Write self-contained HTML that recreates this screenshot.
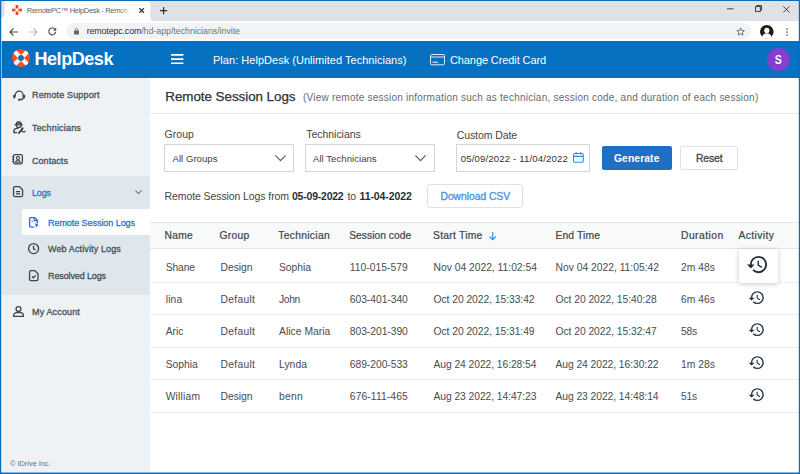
<!DOCTYPE html>
<html><head><meta charset="utf-8">
<style>
*{box-sizing:border-box;margin:0;padding:0}
html,body{width:800px;height:474px;overflow:hidden;background:#fff}
body{font-family:"Liberation Sans","DejaVu Sans",sans-serif;color:#333;position:relative}
.a,.t,svg{position:absolute}
.t{white-space:nowrap;line-height:1}
svg{overflow:visible}
#frame{left:0;top:0;width:800px;height:474px;border:solid #1473c6;border-width:1px 2px 2px 2px;z-index:50}
#tabbar{left:0;top:0;width:800px;height:21px;background:#dee1e6}
#tab{left:4.5px;top:1px;width:146.5px;height:20px;background:#fff;border-radius:5px 5px 0 0}
#toolbar{left:0;top:21px;width:800px;height:20px;background:#fff}
#url{left:66px;top:23px;width:685px;height:16px;border-radius:8px;background:#f1f3f4}
#hdr{left:0;top:41px;width:800px;height:37px;background:#0670c1}
#side{left:0;top:78px;width:150px;height:396px;background:#eef2f5}
#logs{left:0;top:176px;width:150px;height:119px;background:#dfe7ed}
#sel{left:22px;top:209px;width:128px;height:26px;background:#fff;border-radius:2px 0 0 2px}
#ttl{left:150px;top:113px;width:650px;height:1px;background:#e6e8ea}
.box{border:1px solid #d3d5d7;background:#fff}
#thead{left:150px;top:222px;width:650px;height:27px;background:#f8f9f9;border-top:1px solid #e4e6e8;border-bottom:1px solid #e4e6e8}
.rl{left:151px;width:649px;height:1px;background:#eceeef}
#hl{left:739px;top:249px;width:39px;height:34px;background:#fff;box-shadow:0 1px 5px rgba(0,0,0,.22)}
</style></head><body>
<div class="a" id="tabbar"></div>
<svg style="left:0;top:0" width="160" height="21" viewBox="0 0 160 21"><path d="M1.200 21V17.500q3.300 0 3.300-3.300V4.300q0-3.300 3.300-3.300H147q3.300 0 3.300 3.300v13.400q0 3.300 3.300 3.300H1.200z" fill="#fff"/></svg>
<div class="a" style="z-index:5;left:119px;top:3px;width:14px;height:14px;background:linear-gradient(90deg,rgba(255,255,255,0),#fff 85%)"></div>
<div class="a" id="toolbar"></div>
<div class="a" id="url"></div>
<div class="a" id="hdr"></div>
<div class="a" id="side"></div>
<div class="a" id="logs"></div>
<div class="a" id="sel"></div>
<div class="a" id="ttl"></div>
<div class="a" style="left:417px;top:46px;width:1px;height:26px;background:#2a62b5"></div>
<!-- filters -->
<div class="a box" style="left:164px;top:144px;width:130px;height:28px"></div>
<div class="a box" style="left:305px;top:144px;width:130px;height:28px"></div>
<div class="a box" style="left:456px;top:144px;width:134px;height:28px"></div>
<div class="a" style="left:602px;top:146px;width:70px;height:24px;background:#1f6fc4;border-radius:2px"></div>
<div class="a box" style="left:680px;top:146px;width:58px;height:24px;border-radius:2px;border-color:#dfe2e4"></div>
<div class="a box" style="left:427px;top:184px;width:96px;height:24px;border-radius:3px;border-color:#dfe2e4"></div>
<!-- table -->
<div class="a" id="thead"></div>
<div class="a rl" style="top:282px"></div>
<div class="a rl" style="top:314px"></div>
<div class="a rl" style="top:347px"></div>
<div class="a rl" style="top:379px"></div>
<div class="a rl" style="top:412px"></div>
<div class="a" id="hl"></div>
<!-- avatar -->
<div class="a" style="left:767px;top:47.700px;width:23px;height:23px;border-radius:50%;background:#8340cf"></div>
<!-- favicon -->
<svg style="left:11.900px;top:5.100px" width="10" height="10" viewBox="0 0 20 20"><defs><clipPath id="rg2"><path clip-rule="evenodd" d="M10 0a10 10 0 1 0 0 20a10 10 0 1 0 0-20zM10 6.400a3.600 3.600 0 1 1 0 7.200a3.600 3.600 0 1 1 0-7.200z"/></clipPath></defs><circle cx="10" cy="10" r="9.500" fill="#fff" stroke="#b9c6d0" stroke-width="1"/><g clip-path="url(#rg2)"><path d="M10 0V20M0 10H20" stroke="#f0401a" stroke-width="5.200"/></g></svg>
<!-- tab close, plus -->
<svg style="left:138.600px;top:8.100px" width="5.400" height="5" viewBox="0 0 5.400 5"><path d="M.4.300l4.600 4.400M5 .3L.4 4.700" stroke="#2f3337" stroke-width="1.250" fill="none"/></svg>
<svg style="left:160px;top:6.900px" width="7.200" height="7.200" viewBox="0 0 7.200 7.200"><path d="M3.600 0v7.200M0 3.600h7.200" stroke="#2f3337" stroke-width="1.250" fill="none"/></svg>
<!-- window controls -->
<svg style="left:726.5px;top:8px" width="7" height="2" viewBox="0 0 7 2"><path d="M0 .8h6.6" stroke="#333" stroke-width=".9"/></svg>
<svg style="left:754.5px;top:5px" width="7" height="7" viewBox="0 0 7 7"><rect x=".5" y="1.6" width="4.8" height="4.8" fill="none" stroke="#333" stroke-width=".9"/><path d="M1.8 1.6V.5h4.7v4.7H5.3" fill="none" stroke="#333" stroke-width=".9"/></svg>
<svg style="left:782.5px;top:5.5px" width="7" height="7" viewBox="0 0 7 7"><path d="M.3.3l6.2 6.2M6.5.3L.3 6.5" stroke="#333" stroke-width=".9" fill="none"/></svg>
<!-- nav arrows -->
<svg style="left:9px;top:27.5px" width="9" height="8" viewBox="0 0 9 8"><path d="M8.8 4H1M4.4.5L.9 4l3.5 3.5" stroke="#4a4d51" stroke-width="1.1" fill="none"/></svg>
<svg style="left:28.5px;top:27.5px" width="9" height="8" viewBox="0 0 9 8"><path d="M.2 4H8M4.6.5L8.1 4 4.6 7.5" stroke="#b9bcc0" stroke-width="1.1" fill="none"/></svg>
<svg style="left:48px;top:27.3px" width="9" height="9" viewBox="0 0 9 9"><path d="M7.6 4.9A3.4 3.4 0 1 1 6.6 2" stroke="#4a4d51" stroke-width="1.1" fill="none"/><path d="M8.2.6v3.2H5z" fill="#4a4d51"/></svg>
<!-- lock -->
<svg style="left:74.3px;top:28px" width="5" height="6.4" viewBox="0 0 10 13"><rect x="0" y="5" width="10" height="8" rx="1" fill="#5f6368"/><path d="M2.4 5.5V3.6a2.6 2.6 0 0 1 5.2 0V5.5" fill="none" stroke="#5f6368" stroke-width="1.5"/></svg>
<!-- star -->
<svg style="left:736.200px;top:27.200px" width="9.200" height="9.200" viewBox="0 0 24 24"><path d="M12 2.800l2.800 6.300 6.900.700-5.200 4.600 1.500 6.800L12 17.700 6 21.200l1.500-6.800L2.300 9.800l6.900-.700z" fill="none" stroke="#4a4d51" stroke-width="2" stroke-linejoin="round"/></svg>
<!-- profile -->
<svg style="left:760px;top:24.800px" width="13.600" height="13.600" viewBox="0 0 20 20"><circle cx="10" cy="10" r="10" fill="#1b1b1d"/><circle cx="10" cy="8" r="3.800" fill="#fff"/><path d="M3.200 17.300a7 7 0 0 1 13.600 0A9.500 9.500 0 0 1 10 20a9.500 9.500 0 0 1-6.800-2.700z" fill="#fff"/></svg>
<!-- menu dots -->
<svg style="left:786.2px;top:28px" width="2" height="8" viewBox="0 0 2 8"><circle cx="1" cy="1" r=".85" fill="#555"/><circle cx="1" cy="4" r=".85" fill="#555"/><circle cx="1" cy="7" r=".85" fill="#555"/></svg>
<!-- logo lifebuoy -->
<svg style="left:11.650px;top:49.350px" width="18" height="18" viewBox="0 0 20 20"><defs><clipPath id="rg"><path clip-rule="evenodd" d="M10 0a10 10 0 1 0 0 20a10 10 0 1 0 0-20zM10 6.700a3.300 3.300 0 1 1 0 6.600a3.300 3.300 0 1 1 0-6.600z"/></clipPath></defs><g clip-path="url(#rg)"><rect width="20" height="20" fill="#ea5326"/><path d="M0 0L20 20M20 0L0 20" stroke="#fff" stroke-width="4.600"/></g></svg>
<!-- hamburger -->
<svg style="left:170.800px;top:54px" width="12.400" height="10.400" viewBox="0 0 12.400 10.400"><path d="M0 .9h12.400M0 5.100h12.400M0 9.300h12.400" stroke="#fff" stroke-width="1.600"/></svg>
<!-- card -->
<svg style="left:430px;top:54px" width="15" height="11.500" viewBox="0 0 15 11.500"><rect x=".5" y=".5" width="14" height="10.300" rx="1.200" fill="none" stroke="#dfeaf6" stroke-width="1"/><path d="M.5 3h14" stroke="#dfeaf6" stroke-width="1"/><path d="M2.600 8.200h5.200" stroke="#dfeaf6" stroke-width="1.200"/></svg>
<!-- sidebar icons -->
<svg style="left:12.700px;top:89.800px" width="12.400" height="11.200" viewBox="0 0 12.400 11.200"><path d="M2.200 6.800V5.200a4 4 0 0 1 8 0v2.300a2 2 0 0 1-2 2H6.600" fill="none" stroke="#384651" stroke-width="1.300"/><rect x=".2" y="4.800" width="2.100" height="3.600" rx=".8" fill="#384651"/><rect x="10.100" y="4.800" width="2.100" height="3.600" rx=".8" fill="#384651"/><ellipse cx="6.200" cy="9.700" rx="1.300" ry="1.050" fill="#384651"/></svg>
<svg style="left:12.600px;top:120.600px" width="12.800" height="12.800" viewBox="0 0 12.800 12.800"><circle cx="5.700" cy="4.300" r="2.350" fill="none" stroke="#384651" stroke-width="1.300"/><path d="M3.100 3.700a2.650 2.900 0 0 1 5.300 0" fill="none" stroke="#384651" stroke-width="1.300"/><path d="M1.700 3.800h8" stroke="#384651" stroke-width="1.300"/><path d="M.900 11.700v-1.300a3 3 0 0 1 3-3h1.400" fill="none" stroke="#384651" stroke-width="1.400"/><path d="M.400 11.600h3.700" stroke="#384651" stroke-width="1.300"/><path d="M5.800 12.100l3.900-4.700" stroke="#384651" stroke-width="1.700" stroke-linecap="round"/><path d="M10.300 6.900a2 2 0 1 0 2 2.800" fill="none" stroke="#384651" stroke-width="1.300"/></svg>
<svg style="left:12.200px;top:154.300px" width="11" height="10.400" viewBox="0 0 11 10.400"><rect x="1.500" y=".55" width="8.900" height="9.300" rx="1.500" fill="none" stroke="#384651" stroke-width="1.300"/><path d="M0 2.800h1.500M0 5.200h1.500M0 7.600h1.500" stroke="#384651" stroke-width="1.050"/><circle cx="5.950" cy="4" r="1.500" fill="none" stroke="#384651" stroke-width="1.150"/><path d="M3.400 8.300a2.600 2.600 0 0 1 5.100 0z" fill="none" stroke="#384651" stroke-width="1.150"/></svg>
<svg style="left:12.800px;top:186px" width="10.200" height="11.200" viewBox="0 0 10.200 11.200"><path d="M2 .55h4.400l3.200 3.200v5.400a1.500 1.500 0 0 1-1.500 1.500H2A1.500 1.500 0 0 1 .55 9.150V2A1.500 1.500 0 0 1 2 .55z" fill="none" stroke="#384651" stroke-width="1.300"/><path d="M3 5.700h4.200M3 7.900h4.200" stroke="#384651" stroke-width="1.300"/></svg>
<svg style="left:135px;top:190px" width="7" height="4.500" viewBox="0 0 7 4.500"><path d="M.4.500l3.100 3.100L6.600.5" fill="none" stroke="#5d6973" stroke-width="1.050"/></svg>
<svg style="left:28.800px;top:217px" width="9.600" height="10.800" viewBox="0 0 9.600 10.800"><path d="M5.200 10.100H2A1.400 1.400 0 0 1 .6 8.700V2A1.400 1.400 0 0 1 2 .6h3.600l2.800 2.800v3" fill="none" stroke="#2a6fd0" stroke-width="1.400"/><path d="M5.200.8v2.800h3M2.500 4.300h1.600" stroke="#2a6fd0" stroke-width="1.150" fill="none"/><path d="M6.200 6.600l3.200 1.500-1.500.6-.5 1.600z" fill="#2a6fd0" stroke="#2a6fd0" stroke-width=".6" stroke-linejoin="round"/></svg>
<svg style="left:28.100px;top:242.600px" width="11.200" height="11.200" viewBox="0 0 11.200 11.200"><circle cx="5.600" cy="5.600" r="5" fill="none" stroke="#384651" stroke-width="1.300"/><path d="M5.500 2.700v3.100l2 1.100" fill="none" stroke="#384651" stroke-width="1.250"/></svg>
<svg style="left:28.900px;top:269.600px" width="9.600" height="11.200" viewBox="0 0 9.600 11.200"><path d="M1.900.55h3.900l3.200 3.200v5.500a1.400 1.400 0 0 1-1.400 1.400H1.900A1.400 1.400 0 0 1 .55 9.250V1.900A1.400 1.400 0 0 1 1.900.55z" fill="none" stroke="#384651" stroke-width="1.300"/><path d="M3 6.500l1.300 1.300 2.300-2.400" fill="none" stroke="#384651" stroke-width="1.300"/></svg>
<svg style="left:13px;top:306.200px" width="11" height="11" viewBox="0 0 11 11"><circle cx="5.500" cy="3" r="2.450" fill="none" stroke="#384651" stroke-width="1.300"/><path d="M.6 10.400V9.700a3 3 0 0 1 3-3h3.800a3 3 0 0 1 3 3v.7z" fill="none" stroke="#384651" stroke-width="1.300" stroke-linejoin="round"/></svg>
<!-- select chevrons -->
<svg style="left:275px;top:155px" width="11" height="6.500" viewBox="0 0 11 6.500"><path d="M.4.400l5.100 5.300L10.600.4" fill="none" stroke="#5a5f63" stroke-width="1.250"/></svg>
<svg style="left:415px;top:155px" width="11" height="6.500" viewBox="0 0 11 6.500"><path d="M.4.400l5.100 5.300L10.600.4" fill="none" stroke="#5a5f63" stroke-width="1.250"/></svg>
<!-- calendar -->
<svg style="left:573px;top:152.300px" width="10.800" height="10.800" viewBox="0 0 10.800 10.800"><rect x=".55" y="1.500" width="9.700" height="8.700" rx="1.300" fill="none" stroke="#2e8ce6" stroke-width="1.100"/><path d="M.6 4.400h9.600M3.100 0v2.400M7.700 0v2.400" stroke="#2e8ce6" stroke-width="1.100"/></svg>
<!-- sort arrow -->
<svg style="left:489px;top:232px" width="7.400" height="8.400" viewBox="0 0 7.400 8.400"><path d="M3.700 0v7.600M.5 4.500l3.200 3.200 3.200-3.200" fill="none" stroke="#2e8ce6" stroke-width="1.100"/></svg>
<!-- history icons -->
<svg style="left:746.100px;top:252.700px" width="23.040" height="23.040" viewBox="0 0 24 24"><path fill="#1f2f3d" d="M13 3a9 9 0 0 0-9 9H1l3.890 3.890.07.140L9 12H6c0-3.870 3.130-7 7-7s7 3.130 7 7-3.130 7-7 7c-1.930 0-3.680-.79-4.940-2.060l-1.420 1.420A8.954 8.954 0 0 0 13 21a9 9 0 0 0 0-18zm-1 5v5l4.280 2.540.72-1.210-3.500-2.080V8H12z"/></svg>
<svg style="left:748.200px;top:289px" width="17.280" height="17.280" viewBox="0 0 24 24"><path fill="#1f2f3d" d="M13 3a9 9 0 0 0-9 9H1l3.890 3.890.07.140L9 12H6c0-3.870 3.130-7 7-7s7 3.130 7 7-3.130 7-7 7c-1.930 0-3.680-.79-4.940-2.060l-1.420 1.420A8.954 8.954 0 0 0 13 21a9 9 0 0 0 0-18zm-1 5v5l4.280 2.540.72-1.210-3.500-2.080V8H12z"/></svg>
<svg style="left:748.200px;top:321.400px" width="17.280" height="17.280" viewBox="0 0 24 24"><path fill="#1f2f3d" d="M13 3a9 9 0 0 0-9 9H1l3.890 3.890.07.140L9 12H6c0-3.870 3.130-7 7-7s7 3.130 7 7-3.130 7-7 7c-1.930 0-3.680-.79-4.940-2.060l-1.420 1.420A8.954 8.954 0 0 0 13 21a9 9 0 0 0 0-18zm-1 5v5l4.280 2.540.72-1.210-3.500-2.080V8H12z"/></svg>
<svg style="left:748.200px;top:353.800px" width="17.280" height="17.280" viewBox="0 0 24 24"><path fill="#1f2f3d" d="M13 3a9 9 0 0 0-9 9H1l3.890 3.890.07.140L9 12H6c0-3.870 3.130-7 7-7s7 3.130 7 7-3.130 7-7 7c-1.930 0-3.680-.79-4.940-2.060l-1.420 1.420A8.954 8.954 0 0 0 13 21a9 9 0 0 0 0-18zm-1 5v5l4.280 2.540.72-1.210-3.500-2.080V8H12z"/></svg>
<svg style="left:748.200px;top:386.100px" width="17.280" height="17.280" viewBox="0 0 24 24"><path fill="#1f2f3d" d="M13 3a9 9 0 0 0-9 9H1l3.890 3.890.07.140L9 12H6c0-3.870 3.130-7 7-7s7 3.130 7 7-3.130 7-7 7c-1.930 0-3.680-.79-4.940-2.060l-1.420 1.420A8.954 8.954 0 0 0 13 21a9 9 0 0 0 0-18zm-1 5v5l4.280 2.540.72-1.210-3.500-2.080V8H12z"/></svg>

<span class="t" id="t0" style="left:26.8px;top:7.25px;font-size:7.5px;color:#5f6368;letter-spacing:-0.333px;">RemotePC&trade; HelpDesk - Remote</span>
<span class="t" id="t1" style="left:86.7px;top:26.97px;font-size:8.9px;color:#2a2d31;letter-spacing:-0.145px;">remotepc.com</span>
<span class="t" id="t2" style="left:141.2px;top:26.97px;font-size:8.9px;color:#70757a;letter-spacing:-0.052px;">/hd-app/technicians/invite</span>
<span class="t" id="t3" style="left:34.5px;top:49.76px;font-size:18px;font-weight:700;color:#fff;letter-spacing:-0.443px;">HelpDesk</span>
<span class="t" id="t4" style="left:213px;top:54.69px;font-size:11px;color:#fff;letter-spacing:0.029px;">Plan: HelpDesk (Unlimited Technicians)</span>
<span class="t" id="t5" style="left:450px;top:54.69px;font-size:11px;color:#fff;letter-spacing:-0.102px;">Change Credit Card</span>
<span class="t" id="t6" style="left:774.3px;top:53.93px;font-size:12.6px;font-weight:700;color:#fff;transform:scaleX(.84);transform-origin:50% 50%;">S</span>
<span class="t" id="t7" style="left:32px;top:91.38px;font-size:9px;color:#434e58;-webkit-text-stroke:0.28px;letter-spacing:0.147px;">Remote Support</span>
<span class="t" id="t8" style="left:32px;top:123.98px;font-size:9px;color:#434e58;-webkit-text-stroke:0.28px;letter-spacing:0.179px;">Technicians</span>
<span class="t" id="t9" style="left:32px;top:156.98px;font-size:9px;color:#434e58;-webkit-text-stroke:0.28px;letter-spacing:0.059px;">Contacts</span>
<span class="t" id="t10" style="left:32px;top:189.38px;font-size:9px;color:#2f74cf;-webkit-text-stroke:0.28px;letter-spacing:-0.133px;">Logs</span>
<span class="t" id="t11" style="left:48px;top:218.98px;font-size:9px;color:#2f74cf;-webkit-text-stroke:0.28px;letter-spacing:-0.056px;">Remote Session Logs</span>
<span class="t" id="t12" style="left:48px;top:244.78px;font-size:9px;color:#434e58;-webkit-text-stroke:0.28px;letter-spacing:0.125px;">Web Activity Logs</span>
<span class="t" id="t13" style="left:48px;top:272.38px;font-size:9px;color:#434e58;-webkit-text-stroke:0.28px;letter-spacing:-0.119px;">Resolved Logs</span>
<span class="t" id="t14" style="left:32px;top:307.78px;font-size:9px;color:#434e58;-webkit-text-stroke:0.28px;letter-spacing:0.147px;">My Account</span>
<span class="t" id="t15" style="left:9.9px;top:460.27px;font-size:7.6px;color:#6b747c;letter-spacing:-0.099px;">&copy; IDrive Inc.</span>
<span class="t" id="t16" style="left:165.3px;top:89.96px;font-size:13.4px;color:#2d3338;-webkit-text-stroke:0.25px;letter-spacing:-0.043px;">Remote Session Logs</span>
<span class="t" id="t17" style="left:303px;top:92.53px;font-size:10px;color:#666b70;letter-spacing:0.230px;">(View remote session information such as technician, session code, and duration of each session)</span>
<span class="t" id="t18" style="left:164.5px;top:128.71px;font-size:10.5px;color:#444;letter-spacing:0.062px;">Group</span>
<span class="t" id="t19" style="left:306.3px;top:128.71px;font-size:10.5px;color:#444;letter-spacing:-0.043px;">Technicians</span>
<span class="t" id="t20" style="left:456.7px;top:129.81px;font-size:10.5px;color:#444;letter-spacing:-0.089px;">Custom Date</span>
<span class="t" id="t21" style="left:172.5px;top:153.57px;font-size:9.6px;color:#444;letter-spacing:0.020px;">All Groups</span>
<span class="t" id="t22" style="left:313px;top:153.57px;font-size:9.6px;color:#444;letter-spacing:0.027px;">All Technicians</span>
<span class="t" id="t23" style="left:460.7px;top:153.57px;font-size:9.6px;color:#333;letter-spacing:0.150px;">05/09/2022 - 11/04/2022</span>
<span class="t" id="t24" style="left:614px;top:153.98px;font-size:10.3px;font-weight:700;color:#fff;letter-spacing:0.105px;">Generate</span>
<span class="t" id="t25" style="left:696px;top:153.98px;font-size:10.3px;color:#444;-webkit-text-stroke:0.3px;letter-spacing:-0.081px;">Reset</span>
<span class="t" id="t26" style="left:164.5px;top:190.61px;font-size:10.5px;color:#444;letter-spacing:-0.090px;">Remote Session Logs from</span>
<span class="t" id="t27" style="left:292px;top:190.61px;font-size:10.5px;font-weight:700;color:#2b2f33;letter-spacing:-0.222px;">05-09-2022</span>
<span class="t" id="t28" style="left:347.5px;top:190.61px;font-size:10.5px;color:#444;letter-spacing:-0.133px;">to</span>
<span class="t" id="t29" style="left:359.5px;top:190.61px;font-size:10.5px;font-weight:700;color:#2b2f33;letter-spacing:-0.094px;">11-04-2022</span>
<span class="t" id="t30" style="left:440.5px;top:191.78px;font-size:10.3px;color:#4a90e2;-webkit-text-stroke:0.3px;letter-spacing:-0.027px;">Download CSV</span>
<span class="t" id="t31" style="left:164.5px;top:230.58px;font-size:10.3px;color:#41474c;-webkit-text-stroke:0.22px;letter-spacing:0.258px;">Name</span>
<span class="t" id="t32" style="left:219.5px;top:230.58px;font-size:10.3px;color:#41474c;-webkit-text-stroke:0.22px;letter-spacing:0.275px;">Group</span>
<span class="t" id="t33" style="left:278.2px;top:230.58px;font-size:10.3px;color:#41474c;-webkit-text-stroke:0.22px;letter-spacing:0.314px;">Technician</span>
<span class="t" id="t34" style="left:349.2px;top:230.58px;font-size:10.3px;color:#41474c;-webkit-text-stroke:0.22px;letter-spacing:0.014px;">Session code</span>
<span class="t" id="t35" style="left:433px;top:230.58px;font-size:10.3px;color:#41474c;-webkit-text-stroke:0.22px;letter-spacing:0.258px;">Start Time</span>
<span class="t" id="t36" style="left:555.5px;top:230.58px;font-size:10.3px;color:#41474c;-webkit-text-stroke:0.22px;letter-spacing:0.125px;">End Time</span>
<span class="t" id="t37" style="left:681px;top:230.58px;font-size:10.3px;color:#41474c;-webkit-text-stroke:0.22px;letter-spacing:0.460px;">Duration</span>
<span class="t" id="t38" style="left:738.4px;top:230.58px;font-size:10.3px;color:#41474c;-webkit-text-stroke:0.22px;letter-spacing:0.422px;">Activity</span>
<span class="t" id="t39" style="left:165.7px;top:262.98px;font-size:10.3px;color:#474c51;letter-spacing:-0.096px;">Shane</span>
<span class="t" id="t40" style="left:220.6px;top:262.98px;font-size:10.3px;color:#474c51;letter-spacing:-0.027px;">Design</span>
<span class="t" id="t41" style="left:279px;top:262.98px;font-size:10.3px;color:#474c51;letter-spacing:-0.010px;">Sophia</span>
<span class="t" id="t42" style="left:349.8px;top:262.98px;font-size:10.3px;color:#474c51;letter-spacing:0.033px;">110-015-579</span>
<span class="t" id="t43" style="left:433.5px;top:262.98px;font-size:10.3px;color:#474c51;letter-spacing:-0.002px;">Nov 04 2022, 11:02:54</span>
<span class="t" id="t44" style="left:555.5px;top:262.98px;font-size:10.3px;color:#474c51;letter-spacing:0.003px;">Nov 04 2022, 11:05:42</span>
<span class="t" id="t45" style="left:681px;top:262.98px;font-size:10.3px;color:#474c51;letter-spacing:0.003px;">2m 48s</span>
<span class="t" id="t46" style="left:165.7px;top:295.28px;font-size:10.3px;color:#474c51;letter-spacing:0.167px;">lina</span>
<span class="t" id="t47" style="left:220.6px;top:295.28px;font-size:10.3px;color:#474c51;letter-spacing:0.266px;">Default</span>
<span class="t" id="t48" style="left:279px;top:295.28px;font-size:10.3px;color:#474c51;letter-spacing:-0.336px;">John</span>
<span class="t" id="t49" style="left:349.8px;top:295.28px;font-size:10.3px;color:#474c51;letter-spacing:-0.037px;">603-401-340</span>
<span class="t" id="t50" style="left:433.5px;top:295.28px;font-size:10.3px;color:#474c51;letter-spacing:-0.043px;">Oct 20 2022, 15:33:42</span>
<span class="t" id="t51" style="left:555.5px;top:295.28px;font-size:10.3px;color:#474c51;letter-spacing:-0.038px;">Oct 20 2022, 15:40:28</span>
<span class="t" id="t52" style="left:681px;top:295.28px;font-size:10.3px;color:#474c51;letter-spacing:0.003px;">6m 46s</span>
<span class="t" id="t53" style="left:165.7px;top:327.48px;font-size:10.3px;color:#474c51;letter-spacing:-0.034px;">Aric</span>
<span class="t" id="t54" style="left:220.6px;top:327.48px;font-size:10.3px;color:#474c51;letter-spacing:0.266px;">Default</span>
<span class="t" id="t55" style="left:279px;top:327.48px;font-size:10.3px;color:#474c51;letter-spacing:0.033px;">Alice Maria</span>
<span class="t" id="t56" style="left:349.8px;top:327.48px;font-size:10.3px;color:#474c51;letter-spacing:-0.037px;">803-201-390</span>
<span class="t" id="t57" style="left:433.5px;top:327.48px;font-size:10.3px;color:#474c51;letter-spacing:-0.043px;">Oct 20 2022, 15:31:49</span>
<span class="t" id="t58" style="left:555.5px;top:327.48px;font-size:10.3px;color:#474c51;letter-spacing:-0.038px;">Oct 20 2022, 15:32:47</span>
<span class="t" id="t59" style="left:681px;top:327.48px;font-size:10.3px;color:#474c51;letter-spacing:-0.203px;">58s</span>
<span class="t" id="t60" style="left:165.7px;top:359.88px;font-size:10.3px;color:#474c51;letter-spacing:-0.027px;">Sophia</span>
<span class="t" id="t61" style="left:220.6px;top:359.88px;font-size:10.3px;color:#474c51;letter-spacing:0.266px;">Default</span>
<span class="t" id="t62" style="left:279px;top:359.88px;font-size:10.3px;color:#474c51;letter-spacing:0.062px;">Lynda</span>
<span class="t" id="t63" style="left:349.8px;top:359.88px;font-size:10.3px;color:#474c51;letter-spacing:-0.037px;">689-200-533</span>
<span class="t" id="t64" style="left:433.5px;top:359.88px;font-size:10.3px;color:#474c51;letter-spacing:-0.063px;">Aug 24 2022, 16:28:54</span>
<span class="t" id="t65" style="left:555.5px;top:359.88px;font-size:10.3px;color:#474c51;letter-spacing:-0.058px;">Aug 24 2022, 16:30:22</span>
<span class="t" id="t66" style="left:681px;top:359.88px;font-size:10.3px;color:#474c51;letter-spacing:0.003px;">1m 28s</span>
<span class="t" id="t67" style="left:165.7px;top:392.28px;font-size:10.3px;color:#474c51;letter-spacing:0.188px;">William</span>
<span class="t" id="t68" style="left:220.6px;top:392.28px;font-size:10.3px;color:#474c51;letter-spacing:-0.027px;">Design</span>
<span class="t" id="t69" style="left:279px;top:392.28px;font-size:10.3px;color:#474c51;letter-spacing:0.295px;">benn</span>
<span class="t" id="t70" style="left:349.8px;top:392.28px;font-size:10.3px;color:#474c51;letter-spacing:0.102px;">676-111-465</span>
<span class="t" id="t71" style="left:433.5px;top:392.28px;font-size:10.3px;color:#474c51;letter-spacing:-0.063px;">Aug 23 2022, 14:47:23</span>
<span class="t" id="t72" style="left:555.5px;top:392.28px;font-size:10.3px;color:#474c51;letter-spacing:-0.058px;">Aug 23 2022, 14:48:14</span>
<span class="t" id="t73" style="left:681px;top:392.28px;font-size:10.3px;color:#474c51;letter-spacing:-0.203px;">51s</span>
<svg style="left:0;top:0;z-index:50" width="800" height="474" viewBox="0 0 800 474"><path d="M1.200 41V472.600H150" fill="none" stroke="#fff" stroke-opacity=".75" stroke-width="1.400"/><rect x="0" y="0" width="800" height="1" fill="#0c6cbd"/><rect x="0" y="0" width="1.250" height="474" fill="#0c6cbd"/><rect x="798.800" y="0" width="1.200" height="474" fill="#0c6cbd"/><rect x="0" y="472.500" width="800" height="1.500" fill="#0c6cbd"/></svg>
</body></html>
